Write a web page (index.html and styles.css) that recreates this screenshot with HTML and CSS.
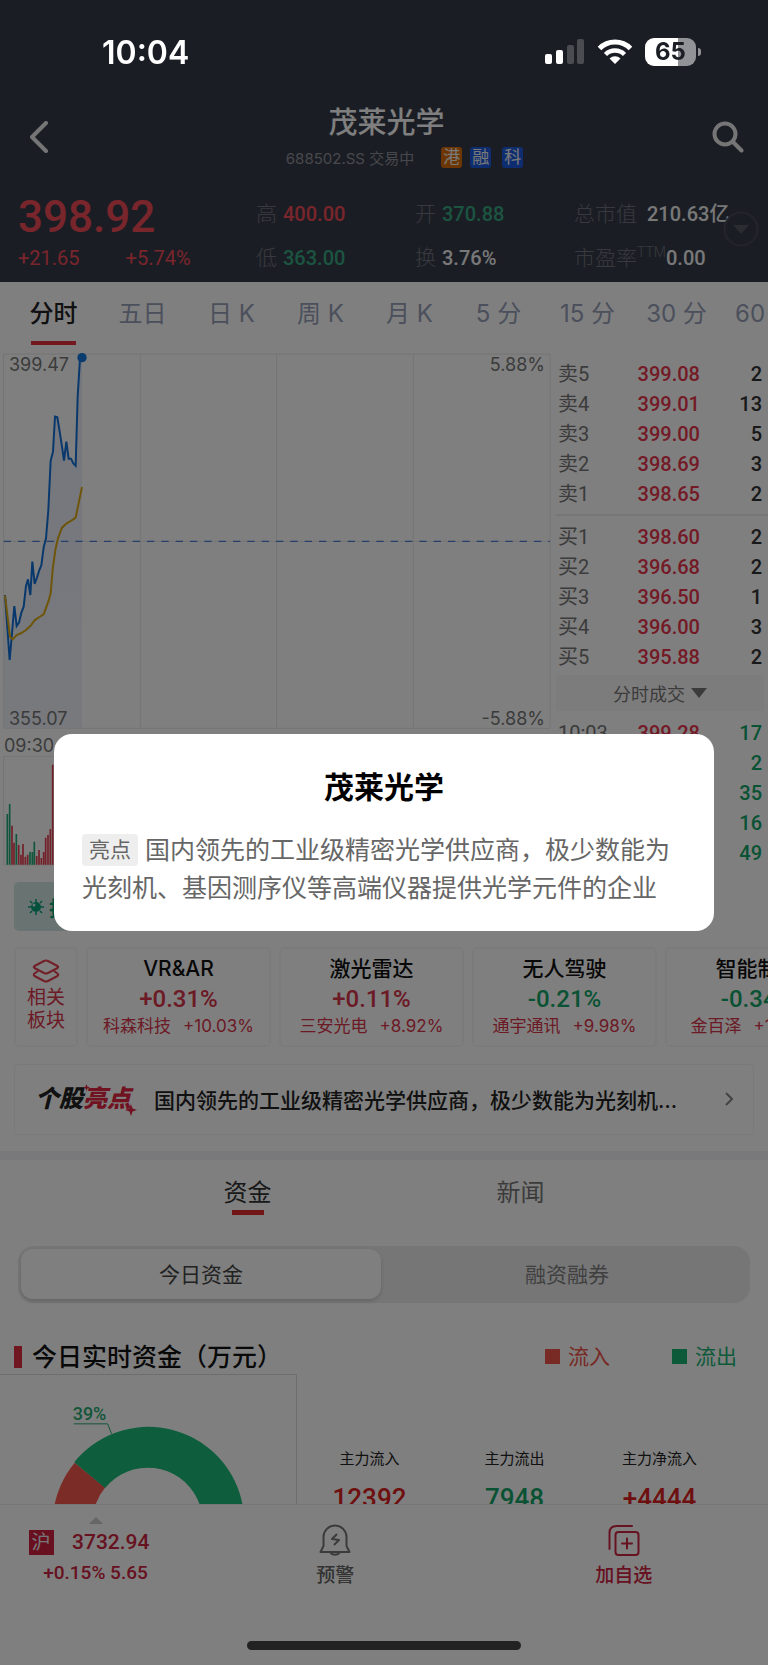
FILE: index.html
```html
<!DOCTYPE html>
<html lang="zh-CN">
<head>
<meta charset="utf-8">
<meta name="viewport" content="width=device-width, initial-scale=1">
<title>茂莱光学</title>
<link rel="stylesheet" href="styles.css">
</head>
<body>
<div class="app">
  <header class="header">
    <div class="status-bar">
      <time class="clock">10:04</time>
      <div class="status-icons">
        <svg width="40" height="26" viewBox="0 0 40 26" aria-hidden="true">
          <rect x="0" y="15" width="7" height="10" rx="2" fill="#fff"/>
          <rect x="11" y="11" width="7" height="14" rx="2" fill="#fff"/>
          <rect x="22" y="6" width="7" height="19" rx="2" fill="#4a4c51"/>
          <rect x="32" y="0" width="7" height="25" rx="2" fill="#4a4c51"/>
        </svg>
        <svg width="36" height="26" viewBox="0 0 36 26" aria-hidden="true">
          <path d="M2.500 9.500a22 22 0 0 1 31 0" fill="none" stroke="#fff" stroke-width="5"/>
          <path d="M8.500 15.500a13.500 13.500 0 0 1 19 0" fill="none" stroke="#fff" stroke-width="4.500"/>
          <path d="M18 25l-5.500-5.500a8 8 0 0 1 11 0z" fill="#fff"/>
        </svg>
        <div class="battery">65</div>
      </div>
    </div>

    <div class="title-bar">
      <button class="icon-button" aria-label="返回">
        <svg width="20" height="34" viewBox="0 0 20 34"><path d="M17 3L3 17l14 14" fill="none" stroke="#fff" stroke-width="4" stroke-linecap="round" stroke-linejoin="round"/></svg>
      </button>
      <div class="title-block">
        <h1 class="stock-name">茂莱光学</h1>
        <div class="stock-meta">
          <span class="stock-code">688502.SS 交易中</span>
          <span class="tag tag-orange">港</span>
          <span class="tag">融</span>
          <span class="tag tag-gap">科</span>
        </div>
      </div>
      <button class="icon-button" aria-label="搜索">
        <svg width="32" height="32" viewBox="0 0 32 32"><circle cx="13" cy="13" r="10.500" fill="none" stroke="#fff" stroke-width="4"/><path d="M21 21l8.500 8.500" stroke="#fff" stroke-width="4" stroke-linecap="round"/></svg>
      </button>
    </div>

    <div class="quote">
      <div class="quote-main">
        <div class="last-price">398.92</div>
        <div class="change"><span>+21.65</span><span>+5.74%</span></div>
      </div>
      <dl class="quote-grid">
        <div><dt>高</dt><dd class="up">400.00</dd></div>
        <div><dt>开</dt><dd class="down">370.88</dd></div>
        <div class="wide"><dt>总市值</dt><dd>210.63亿</dd></div>
        <div><dt>低</dt><dd class="down">363.00</dd></div>
        <div><dt>换</dt><dd>3.76%</dd></div>
        <div class="tight"><dt>市盈率<sup>TTM</sup></dt><dd>0.00</dd></div>
      </dl>
      <button class="expand" aria-label="展开">
        <svg width="36" height="36" viewBox="0 0 36 36"><circle cx="18" cy="18" r="16.500" fill="#363b49" stroke="#484b58" stroke-width="2"/><path d="M10 14h16l-8 9z" fill="#555865"/></svg>
      </button>
    </div>
  </header>

  <main class="content">
    <nav class="period-tabs">
      <button class="period active">分时</button>
      <button class="period">五日</button>
      <button class="period">日 K</button>
      <button class="period">周 K</button>
      <button class="period">月 K</button>
      <button class="period">5 分</button>
      <button class="period">15 分</button>
      <button class="period">30 分</button>
      <button class="period">60 分</button>
    </nav>

    <section class="market">
      <div class="charts">
        <div class="price-chart">
          <svg class="plot" viewBox="0 0 1653 1140" aria-label="分时走势">
            <defs>
              <linearGradient id="area" x1="0" y1="0" x2="0" y2="1">
                <stop offset="0" stop-color="#e9eefa"/>
                <stop offset="1" stop-color="#f0f3fa"/>
              </linearGradient>
            </defs>
            <path fill="url(#area)" d="M12 735L15 735 29 930 43 768 50 828 57 818 64 788 71 770 78 708 84 688 91 735 97 635 104 702 111 682 118 660 124 646 131 592 138 565 145 480 152 332 159 305 165 200 172 202 179 245 186 290 192 332 199 275 206 326 213 326 220 340 227 347 233 140 240 25 246 23V1133H12z"/>
            <g fill="none" stroke="#e8e8ea" stroke-width="3">
              <path d="M11 12H1650V1135H11zM421 12V1135M830 12V1135M1240 12V1135M11 574H1650"/>
            </g>
            <path d="M11 574H1650" stroke="#4a7fd8" stroke-width="4" stroke-dasharray="22 21"/>
            <path fill="none" stroke="#1070d8" stroke-width="6" d="M15 735L29 930 43 768 50 828 57 818 64 788 71 770 78 708 84 688 91 735 97 635 104 702 111 682 118 660 124 646 131 592 138 565 145 480 152 332 159 305 165 200 172 202 179 245 186 290 192 332 199 275 206 326 213 326 220 340 227 347 233 140 240 25 246 23"/>
            <path fill="none" stroke="#dcaa12" stroke-width="6" d="M15 737L30 860 38 868 50 855 64 849 78 840 91 828 104 811 118 801 131 793 145 755 152 730 158 658 166 600 174 565 186 533 200 520 214 512 227 503 240 440 246 411"/>
            <circle cx="246" cy="23" r="14" fill="#1478dc"/>
          </svg>
          <span class="axis top-left">399.47</span>
          <span class="axis top-right">5.88%</span>
          <span class="axis bottom-left">355.07</span>
          <span class="axis bottom-right">-5.88%</span>
        </div>
        <div class="time-axis">09:30</div>
        <svg class="plot" viewBox="0 0 1653 330" aria-label="成交量">
          <path d="M11 1H1650V327H11z" fill="none" stroke="#e8e8ea" stroke-width="3"/>
          <path stroke="#22ab78" stroke-width="5" d="M22 326V174M29 326V144M49 326V234M90 326V288M97 326V288M103 326V257"/>
          <path stroke="#e43f51" stroke-width="5" d="M36 326V209M42 326V260M56 326V267M63 326V296M69 326V264M76 326V302M83 326V296M110 326V300M117 326V282M124 326V306M131 326V288M137 326V245M144 326V237M151 326V219M158 326V26"/>
        </svg>
      </div>

      <div class="book">
        <table class="levels">
          <tbody>
            <tr><th>卖5</th><td class="price">399.08</td><td>2</td></tr>
            <tr><th>卖4</th><td class="price">399.01</td><td>13</td></tr>
            <tr><th>卖3</th><td class="price">399.00</td><td>5</td></tr>
            <tr><th>卖2</th><td class="price">398.69</td><td>3</td></tr>
            <tr><th>卖1</th><td class="price">398.65</td><td>2</td></tr>
          </tbody>
        </table>
        <hr class="book-divider">
        <table class="levels">
          <tbody>
            <tr><th>买1</th><td class="price">398.60</td><td>2</td></tr>
            <tr><th>买2</th><td class="price">396.68</td><td>2</td></tr>
            <tr><th>买3</th><td class="price">396.50</td><td>1</td></tr>
            <tr><th>买4</th><td class="price">396.00</td><td>3</td></tr>
            <tr><th>买5</th><td class="price">395.88</td><td>2</td></tr>
          </tbody>
        </table>
        <button class="trades-toggle">分时成交
          <svg width="16" height="10" viewBox="0 0 16 10" aria-hidden="true"><path d="M0 0h16L8 10z" fill="#777"/></svg>
        </button>
        <table class="levels trades">
          <tbody>
            <tr><th>10:03</th><td class="price">399.28</td><td>17</td></tr>
            <tr><th></th><td class="price"></td><td>2</td></tr>
            <tr><th></th><td class="price"></td><td>35</td></tr>
            <tr><th></th><td class="price"></td><td>16</td></tr>
            <tr><th></th><td class="price"></td><td>49</td></tr>
          </tbody>
        </table>
      </div>
    </section>

    <div class="notice">
      <svg width="16" height="16" viewBox="0 0 16 16" aria-hidden="true">
        <circle cx="8" cy="8" r="5" fill="#07a37b"/>
        <path d="M8 0v3M8 13v3M0 8h3M13 8h3M2 2l2 2M12 12l2 2M14 2l-2 2M4 12l-2 2" stroke="#07a37b" stroke-width="1.500"/>
        <circle cx="6" cy="6" r="1.500" fill="#d9efea"/>
      </svg>
      <span>投</span>
    </div>

    <section class="sectors">
      <div class="sector-lead">
        <svg width="28" height="24" viewBox="0 0 28 24" aria-hidden="true">
          <g fill="none" stroke="#e43f51" stroke-width="2" stroke-linejoin="round">
            <path d="M12 2Q14 1 16 2L25.500 7Q27 8 25.500 9L16 14Q14 15 12 14L2.500 9Q1 8 2.500 7z"/>
            <path d="M6 12L2.500 14.500Q1 16 2.500 17L12 22Q14 23 16 22L25.500 17Q27 16 25.500 14.500L22 12"/>
          </g>
        </svg>
        <span>相关</span><span>板块</span>
      </div>
      <a class="sector" href="#vr"><b>VR&amp;AR</b><strong>+0.31%</strong><small><span>科森科技</span><span>+10.03%</span></small></a>
      <a class="sector" href="#lidar"><b>激光雷达</b><strong>+0.11%</strong><small><span>三安光电</span><span>+8.92%</span></small></a>
      <a class="sector" href="#driving"><b>无人驾驶</b><strong class="fall">-0.21%</strong><small><span>通宇通讯</span><span>+9.98%</span></small></a>
      <a class="sector" href="#smart"><b>智能制造</b><strong class="fall">-0.34%</strong><small><span>金百泽</span><span>+10.03%</span></small></a>
    </section>

    <a class="highlight" href="#highlight">
      <span class="highlight-logo">个股<em>亮点</em>
        <svg class="spark spark-small" viewBox="0 0 10 10"><path d="M5 0L6.300 3.700 10 5 6.300 6.300 5 10 3.700 6.300 0 5 3.700 3.700z" fill="#e0243f"/></svg>
        <svg class="spark spark-large" viewBox="0 0 10 10"><path d="M5 0L6.300 3.700 10 5 6.300 6.300 5 10 3.700 6.300 0 5 3.700 3.700z" fill="#e0243f"/></svg>
      </span>
      <span class="highlight-text">国内领先的工业级精密光学供应商，极少数能为光刻机、基因测序仪等高端仪器提供光学元件的企业</span>
      <svg width="8" height="14" viewBox="0 0 8 14" aria-hidden="true"><path d="M1 1l6 6-6 6" fill="none" stroke="#888" stroke-width="2"/></svg>
    </a>

    <section class="funds">
      <div class="fund-tabs">
        <button class="fund-tab active">资金</button>
        <button class="fund-tab">新闻</button>
      </div>
      <div class="segment">
        <button class="segment-item active">今日资金</button>
        <button class="segment-item">融资融券</button>
      </div>
      <div class="fund-heading">
        <h2>今日实时资金（万元）</h2>
        <div class="legend inflow">流入</div>
        <div class="legend outflow">流出</div>
      </div>
      <div class="fund-body">
        <div class="donut">
          <svg class="donut-plot" viewBox="0 0 297 245" aria-label="资金占比">
            <path d="M75 88A95 95 0 0 0 148.500 244V203A55 55 0 0 1 105.500 113z" fill="#f8594e"/>
            <path d="M74.500 87.500A96 96 0 1 1 148.500 244V203A55 55 0 1 0 105.500 113.500z" fill="#1dbd7b"/>
            <path d="M74 49h34l4 10" fill="none" stroke="#27ab72" stroke-width="1"/>
            <text x="73" y="45" class="donut-label">39%</text>
          </svg>
        </div>
        <dl class="fund-stats">
          <div><dt>主力流入</dt><dd>12392</dd></div>
          <div><dt>主力流出</dt><dd class="fall">7948</dd></div>
          <div><dt>主力净流入</dt><dd>+4444</dd></div>
        </dl>
      </div>
    </section>
  </main>

  <footer class="footer">
    <div class="actions">
      <button class="index-quote">
        <svg class="caret" width="14" height="7" viewBox="0 0 14 7" aria-hidden="true"><path d="M7 0l7 7H0z" fill="#ccc"/></svg>
        <span class="index-line"><span class="index-badge">沪</span><span class="index-value">3732.94</span></span>
        <span class="index-change">+0.15% 5.65</span>
      </button>
      <button class="action">
        <svg width="32" height="34" viewBox="0 0 32 34" aria-hidden="true">
          <g fill="none" stroke="#777" stroke-width="2" stroke-linejoin="round">
            <path d="M4.500 22V13a11.500 11.500 0 0 1 23 0v9l3 6H1.500z"/>
            <path d="M11.500 28.500a5 4 0 0 0 9 0"/>
            <path d="M18 10l-5 5 7 1-5 5"/>
          </g>
        </svg>
        预警
      </button>
      <button class="action add">
        <svg width="32" height="34" viewBox="0 0 32 34" aria-hidden="true">
          <g fill="none" stroke="#cf2442" stroke-width="2" stroke-linecap="round">
            <path d="M1.500 25V9Q1.500 2 8.500 2H24"/>
            <rect x="7.500" y="8" width="23" height="23" rx="3"/>
            <path d="M19 14.500v10M14 19.500h10"/>
          </g>
        </svg>
        加自选
      </button>
    </div>
    <div class="home-indicator"></div>
  </footer>
</div>

<div class="overlay">
  <div class="dialog" role="dialog" aria-modal="true" aria-labelledby="dialog-title">
    <h2 class="dialog-title" id="dialog-title">茂莱光学</h2>
    <p class="dialog-text"><span class="dialog-tag">亮点</span>国内领先的工业级精密光学供应商，极少数能为光刻机、基因测序仪等高端仪器提供光学元件的企业</p>
  </div>
</div>
</body>
</html>
```
FILE: styles.css
```css
:root {
  --sans: Inter, "Noto Sans CJK SC", sans-serif;
  --num: Roboto, "Noto Sans CJK SC", sans-serif;
  --red: #e8354c;
  --green: #13a568;
}

* { box-sizing: border-box; }

body, h1, h2, dl, dd, p { margin: 0; }

body {
  font-family: var(--sans);
  color: #222;
  background: #fff;
}

button {
  font: inherit;
  color: inherit;
  background: none;
  border: 0;
  padding: 0;
}

a { color: inherit; text-decoration: none; }
svg { display: block; flex: none; }

.app {
  display: flex;
  flex-direction: column;
  height: 100vh;
  overflow: hidden;
}

/* Header */
.header {
  flex: none;
  background: #363b49;
  color: #fff;
}

.status-bar {
  position: relative;
  z-index: 3;
  display: flex;
  justify-content: space-between;
  align-items: center;
  height: 104px;
  padding: 0 72px 0 102px;
}

.clock {
  font-size: 32px;
  font-weight: 600;
}

.status-icons {
  display: flex;
  align-items: center;
  gap: 12px;
}

.battery {
  position: relative;
  width: 51px;
  border-radius: 9px;
  background: linear-gradient(90deg, #fff 65%, #929397 65%);
  color: #1b1e25;
  font-size: 24px;
  font-weight: 700;
  line-height: 28px;
  text-align: center;
}

.battery::after {
  content: "";
  position: absolute;
  right: -5px;
  top: 10px;
  width: 3px;
  height: 8px;
  border-radius: 0 3px 3px 0;
  background: #929397;
}

.title-bar {
  display: flex;
  justify-content: space-between;
  align-items: center;
  height: 66px;
  padding: 0 24px 0 29px;
}

.icon-button { width: 32px; opacity: .9; }

.stock-name {
  font-size: 29px;
  font-weight: 500;
  line-height: 38px;
  text-align: center;
}

.title-block { padding-top: 2px; }

.stock-meta {
  display: flex;
  align-items: center;
  gap: 8px;
  height: 30px;
  margin-right: -36px;
}

.title-block {
  display: flex;
  flex-direction: column;
  align-items: center;
}

.stock-code {
  margin-right: 19px;
  font-size: 15px;
  color: #8f9199;
}

.tag {
  width: 21px;
  border-radius: 3px;
  background: #1c5be0;
  color: #f2f2f2;
  font-size: 17px;
  line-height: 21px;
  text-align: center;
}

.tag-orange { background: #d96b05; }
.tag-gap { margin-left: 3px; }

.quote {
  position: relative;
  display: flex;
  gap: 16px;
  height: 112px;
  padding: 22px 0 0 18px;
  font-family: var(--num);
}

.quote-main {
  width: 222px;
  color: #f24b58;
}

.last-price {
  font-size: 44px;
  font-weight: 500;
  line-height: 50px;
}

.change {
  display: flex;
  gap: 46px;
  padding-top: 4px;
  font-size: 20px;
  line-height: 24px;
}

.quote-grid {
  flex: 1;
  display: grid;
  grid-template-columns: 159px 159px 1fr;
  grid-auto-rows: 44px;
}

.quote-grid > div {
  display: flex;
  align-items: center;
  gap: 6px;
  font-size: 21px;
  line-height: 44px;
  white-space: nowrap;
}

.quote-grid > .wide { gap: 10px; }
.quote-grid > .tight { gap: 0; }
.quote-grid dt { color: #70737e; font-weight: 300; }
.quote-grid dd { font-size: 20px; font-weight: 500; color: #f0f0f0; }
.quote-grid dd.up { color: #f24b58; }
.quote-grid dd.down { color: #36a982; }
.quote-grid sup { font-size: 14px; line-height: 0; }

.expand {
  position: absolute;
  right: 9px;
  top: 41px;
}

/* Content */
.content {
  flex: 1;
  min-height: 0;
  overflow: hidden;
}

.period-tabs {
  display: flex;
  padding-left: 9px;
  overflow: hidden;
}

.period {
  position: relative;
  flex: none;
  width: 89px;
  font-size: 24px;
  line-height: 64px;
  height: 68px;
  padding-bottom: 4px;
  color: #97a0b8;
  white-space: nowrap;
}

.period.active { color: #222; font-weight: 500; }

.period.active::after {
  content: "";
  position: absolute;
  left: 22px;
  bottom: 5px;
  width: 45px;
  height: 4px;
  background: #e8303f;
}

.market { display: flex; }
.charts { flex: 1; min-width: 0; }
.price-chart { position: relative; }
.plot { width: 100%; height: auto; }

.axis {
  position: absolute;
  font-size: 18px;
  line-height: 20px;
  color: #777;
}

.top-left { left: 9px; top: 5px; }
.top-right { right: 6px; top: 5px; }
.bottom-left { left: 9px; bottom: 1px; }
.bottom-right { right: 6px; bottom: 1px; }

.time-axis {
  height: 26px;
  padding-left: 4px;
  font-size: 18px;
  line-height: 31px;
  color: #777;
}

.book {
  width: 217px;
  padding: 9px 4px 0 5px;
  font-family: var(--num);
}

.levels {
  width: 100%;
  border-collapse: collapse;
  table-layout: fixed;
  font-size: 20px;
  line-height: 30px;
}

.levels th,
.levels td {
  height: 30px;
  padding: 0;
  line-height: 30px;
  text-align: right;
  font-weight: 500;
}

.levels td { color: #333; }
.levels td:last-child { padding-right: 2px; }

.levels th {
  width: 58px;
  padding-left: 2px;
  text-align: left;
  font-weight: 400;
  color: #777;
}

.levels .price { width: 86px; color: var(--red); }

.book-divider {
  margin: 5px -4px 6px 0;
  border: 0;
  border-top: 2px solid #ececee;
}

.trades-toggle {
  display: flex;
  justify-content: center;
  align-items: center;
  gap: 6px;
  width: 100%;
  height: 36px;
  margin: 3px 0 7px;
  background: #f9f9fa;
  font-size: 18px;
  color: #777;
}

.trades td:last-child { color: var(--green); }

.notice {
  display: flex;
  align-items: center;
  gap: 5px;
  width: 240px;
  height: 49px;
  margin: 14px 0 16px 14px;
  padding-left: 14px;
  border-radius: 5px;
  background: #d3e6e2;
  color: #07a37b;
  font-size: 21px;
  font-weight: 700;
}

.sectors {
  display: flex;
  gap: 8px;
  padding-left: 14px;
  overflow: hidden;
}

.sector-lead,
.sector {
  flex: none;
  display: flex;
  flex-direction: column;
  align-items: center;
  height: 100px;
  border: 2px solid #f7f7f8;
  border-radius: 5px;
  color: #d8344a;
}

.sector-lead {
  width: 64px;
  padding-top: 10px;
  font-size: 19px;
  line-height: 23px;
}

.sector-lead svg { margin-bottom: 3px; }

.sector { width: 185px; padding-top: 4px; }
.sector b { font-size: 21px; font-weight: 500; line-height: 32px; color: #111; }
.sector strong { font-family: var(--num); font-size: 24px; font-weight: 500; line-height: 28px; }
.sector small { display: flex; gap: 12px; font-size: 17px; line-height: 26px; }
.fall, .sector .fall { color: var(--green); }

.highlight {
  display: flex;
  align-items: center;
  height: 71px;
  margin: 17px 14px 16px;
  padding: 0 20px 2px;
  border: 1px solid #f3f3f4;
  border-radius: 4px;
}

.highlight-logo {
  position: relative;
  flex: none;
  width: 100px;
  font-size: 24px;
  font-weight: 900;
  font-style: italic;
  line-height: 30px;
  white-space: nowrap;
}

.highlight-logo em { color: #e0243f; }
.spark { position: absolute; }
.spark-small { left: 48px; top: 0; width: 7px; height: 7px; }
.spark-large { right: -2px; bottom: -2px; width: 12px; height: 12px; }

.highlight-text {
  width: 538px;
  margin: 0 auto 0 19px;
  overflow: hidden;
  font-size: 21px;
  font-weight: 500;
  text-overflow: ellipsis;
  white-space: nowrap;
}

/* Funds */
.funds { border-top: 9px solid #f3f3f7; }

.fund-tabs {
  display: flex;
  justify-content: center;
  gap: 209px;
  padding: 16px 0 31px;
}

.fund-tab {
  position: relative;
  width: 64px;
  height: 39px;
  font-size: 24px;
  line-height: 34px;
  padding-bottom: 5px;
  color: #777;
}

.fund-tab.active { color: #333; }

.fund-tab.active::after {
  content: "";
  position: absolute;
  left: 16px;
  bottom: 0;
  width: 32px;
  height: 5px;
  background: #e22d2d;
}

.segment {
  display: flex;
  gap: 6px;
  height: 57px;
  margin: 0 18px;
  padding: 3px;
  border-radius: 16px;
  background: #ededee;
}

.segment-item {
  flex: 1;
  margin-bottom: 1px;
  padding-bottom: 2px;
  border-radius: 12px;
  font-size: 21px;
  color: #808080;
}

.segment-item.active {
  background: #fff;
  color: #444;
  box-shadow: 0 2px 4px #c8c8ca;
}

.fund-heading {
  display: flex;
  align-items: center;
  height: 71px;
  padding: 36px 31px 0 14px;
}

.fund-heading h2 {
  margin-right: auto;
  border-left: 8px solid #df2c43;
  padding-left: 10px;
  font-size: 25px;
  font-weight: 500;
  line-height: 22px;
  color: #111;
}

.legend {
  display: flex;
  align-items: center;
  gap: 8px;
  margin-left: 62px;
  font-size: 21px;
  line-height: 22px;
}

.legend::before {
  content: "";
  width: 15px;
  height: 15px;
  background: currentColor;
}

.inflow { color: #f0544a; }
.outflow { color: #1bb574; }

.fund-body { display: flex; }

.donut {
  width: 297px;
  border: solid #dcdcdc;
  border-width: 1px 1px 0 0;
}

.donut-plot { width: 100%; height: auto; }

.donut-label {
  font-family: var(--num);
  font-size: 18px;
  font-weight: 500;
  fill: #27ab72;
}

.fund-stats {
  flex: 1;
  display: grid;
  grid-template-columns: repeat(3, 145px);
  align-content: start;
  padding: 75px 0 0;
  text-align: center;
}

.fund-stats dt { font-size: 15px; line-height: 20px; }

.fund-stats dd {
  padding-top: 14px;
  font-family: var(--num);
  font-size: 26px;
  font-weight: 500;
  line-height: 30px;
  color: #dc2020;
}

.fund-stats dd.fall { color: var(--green); }

/* Footer */
.footer {
  flex: none;
  border-top: 1px solid #ececec;
  background: #fff;
}

.actions { display: flex; height: 136px; }

.index-quote {
  display: flex;
  flex-direction: column;
  align-items: center;
  align-self: flex-start;
  width: 191px;
  padding-top: 12px;
  color: #cf2442;
  font-family: var(--num);
  font-weight: 500;
}

.index-line {
  display: flex;
  align-items: center;
  justify-content: space-between;
  width: 121px;
  margin: 3px 13px 0 0;
  font-size: 21px;
  line-height: 30px;
}

.index-badge {
  width: 25px;
  background: #d01f40;
  color: #eee;
  font-size: 19px;
  font-weight: 400;
  line-height: 25px;
}

.index-change { font-size: 19px; line-height: 32px; }

.action {
  display: flex;
  flex-direction: column;
  align-items: center;
  align-self: flex-start;
  flex: 1;
  gap: 4px;
  padding-top: 19px;
  font-size: 19px;
  font-weight: 500;
  line-height: 28px;
  color: #666;
}

.action.add { color: #cf2442; }

.home-indicator {
  width: 274px;
  height: 9px;
  margin: 0 auto 15px;
  border-radius: 5px;
  background: #444;
}

/* Dialog */
.overlay {
  position: fixed;
  inset: 0;
  z-index: 2;
  display: flex;
  align-items: center;
  padding: 0 54px;
  background: rgba(0, 0, 0, .5);
}

.dialog {
  flex: 1;
  padding: 30px 28px 24px;
  border-radius: 18px;
  background: #fff;
}

.dialog-title {
  margin-bottom: 21px;
  color: #000;
  font-size: 30px;
  font-weight: 600;
  line-height: 46px;
  text-align: center;
}

.dialog-text {
  color: #666;
  font-size: 25px;
  line-height: 38px;
}

.dialog-tag {
  display: inline-block;
  margin: 3px 7px 0 0;
  padding: 0 7px;
  border-radius: 4px;
  background: #eee;
  font-size: 21px;
  line-height: 32px;
  vertical-align: top;
}
```
